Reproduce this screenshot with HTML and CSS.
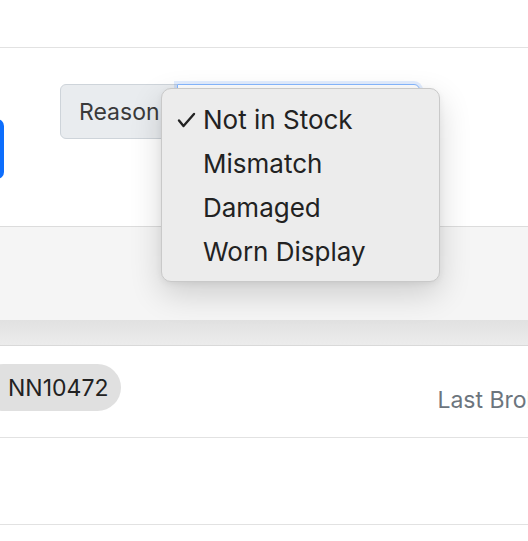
FILE: index.html
```html
<!DOCTYPE html>
<html lang="en">
<head>
    <meta charset="utf-8" />
    <meta name="viewport" content="width=device-width" />
    <title>Returns</title>
    <link rel="stylesheet" href="styles.css">
</head>
<body>
    <!-- Top bar -->
    <header class="topbar"></header>

    <!-- Filters -->
    <section class="filters">
        <button class="btn-primary" type="button" aria-label="Apply"></button>
        <div class="input-group">
            <span class="input-group-text">Reason</span>
            <div class="select-box"></div>

            <!-- open select menu -->
            <ul class="select-menu">
                <li class="selected">
                    <span class="check">
                        <svg width="20" height="16" viewBox="0 0 20 16"><path d="M2 8.5 L6.5 14 L17 2" fill="none" stroke="#222" stroke-width="2.4" stroke-linecap="round" stroke-linejoin="round"/></svg>
                    </span>Not in Stock
                </li>
                <li><span class="check"></span>Mismatch</li>
                <li><span class="check"></span>Damaged</li>
                <li><span class="check"></span>Worn Display</li>
            </ul>
        </div>
    </section>

    <!-- List -->
    <div class="list-head"></div>
    <div class="list-shade"></div>

    <div class="list-row">
        <span class="badge">NN10472</span>
        <span class="muted">Last Broken</span>
    </div>
    <div class="list-row empty"></div>
</body>
</html>
```

FILE: styles.css
```css
:root {
    --line-color: #e2e2e2;
    --primary: #0d6efd;
    --font-family: Inter, "Liberation Sans", sans-serif;
}

* {
    box-sizing: border-box;
    margin: 0;
    padding: 0;
}

body {
    background-color: #fff;
    font-family: var(--font-family);
    color: #222;
    overflow: hidden;
    width: 528px;
    height: 541px;
}

.topbar {
    height: 48px;
    border-bottom: 1px solid var(--line-color);
}

.filters {
    display: flex;
    align-items: flex-start;
    height: 179px;
    padding-top: 36px;
    border-bottom: 1px solid #dcdcdc;
}

.btn-primary {
    width: 80px;
    height: 60px;
    margin: 35px 0 0 -76px;
    border: none;
    border-radius: 7px;
    background-color: var(--primary);
}

.input-group {
    position: relative;
    display: flex;
    margin-left: 56px;
}

.input-group-text {
    display: flex;
    align-items: center;
    height: 55px;
    padding: 0 17px 0 18px;
    background-color: #e9ecef;
    border: 1px solid #ced4da;
    border-radius: 6px 0 0 6px;
    color: #3a3a3a;
    font-size: 23px;
}

.select-box {
    width: 243px;
    height: 55px;
    margin-left: -1px;
    border: 1px solid #86b7fe;
    border-radius: 0 6px 6px 0;
    background-color: #fff;
    box-shadow: 0 0 0 3px rgba(13, 110, 253, .12);
}

.select-menu {
    position: absolute;
    top: 4px;
    left: 101px;
    width: 279px;
    height: 194px;
    padding-top: 8px;
    list-style: none;
    background-color: #ececec;
    border: 1px solid #c9c9c9;
    border-radius: 10px;
    box-shadow: 0 12px 32px rgba(0, 0, 0, .16), 0 2px 6px rgba(0, 0, 0, .06);
    z-index: 10;
}

.select-menu li {
    display: flex;
    align-items: center;
    height: 44px;
    padding-left: 15px;
    font-size: 26px;
    color: #222;
    white-space: nowrap;
}

.check {
    display: flex;
    align-items: center;
    width: 26px;
    height: 20px;
    padding-top: 2px;
}

.list-head {
    height: 93px;
    background-color: #f5f5f5;
}

.list-shade {
    height: 26px;
    background: linear-gradient(#e1e1e1, #ececec);
    border-bottom: 1px solid #d9d9d9;
}

.list-row {
    display: flex;
    align-items: flex-start;
    height: 92px;
    padding-top: 18px;
    border-bottom: 1px solid var(--line-color);
    white-space: nowrap;
}

.list-row.empty {
    height: 87px;
}

.badge {
    display: flex;
    align-items: center;
    height: 47px;
    margin-left: -20px;
    padding: 0 13px 0 28px;
    border-radius: 24px;
    background-color: #e0e0e0;
    font-size: 23px;
    color: #222;
}

.muted {
    margin: 22px 0 0 316px;
    font-size: 23px;
    color: #6c757d;
}
```
